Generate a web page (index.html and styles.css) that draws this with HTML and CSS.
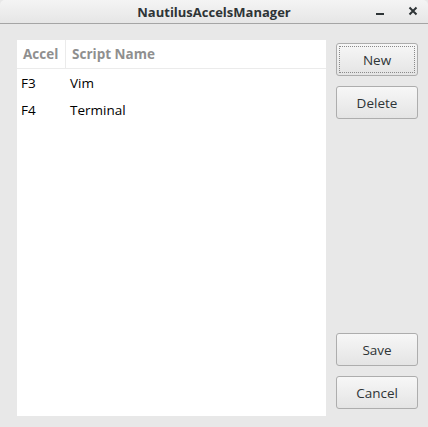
FILE: index.html
```html
<!DOCTYPE html>
<html>
<head>
<meta charset="utf-8">
<link rel="stylesheet" href="styles.css">
</head>
<body>
<div class="window">
  <div class="titlebar">
    <span class="title">NautilusAccelsManager</span>
    <div class="controls">
      <span class="ctl min"><svg width="10" height="10" viewBox="0 0 10 10"><rect x="1" y="7" width="8" height="2" fill="#2e3436"/></svg></span>
      <span class="ctl close"><svg width="10" height="10" viewBox="0 0 10 10"><path d="M1.5 1.5 L8.5 8.5 M8.5 1.5 L1.5 8.5" stroke="#2e3436" stroke-width="2"/></svg></span>
    </div>
  </div>
  <div class="content">
    <div class="list">
      <div class="header">
        <div class="col c1">Accel</div>
        <div class="col c2">Script Name</div>
      </div>
      <div class="row"><div class="col c1">F3</div><div class="col c2">Vim</div></div>
      <div class="row"><div class="col c1">F4</div><div class="col c2">Terminal</div></div>
    </div>
    <div class="buttons">
      <div class="group top">
        <button class="btn focused"><span>New</span></button>
        <button class="btn">Delete</button>
      </div>
      <div class="group bottom">
        <button class="btn">Save</button>
        <button class="btn">Cancel</button>
      </div>
    </div>
  </div>
</div>
</body>
</html>
```
FILE: styles.css
```css
html, body { margin: 0; padding: 0; }
body {
  width: 428px; height: 427px; overflow: hidden;
  background: #e8e8e8;
  font-family: "Open Sans", "Noto Sans", sans-serif;
  color: #2e3436;
}
.window { width: 428px; height: 427px; display: flex; flex-direction: column; background: #e8e8e8; }
.titlebar {
  height: 23px;
  border-bottom: 1px solid #a5a5a5;
  background: linear-gradient(#f4f4f4, #e6e6e6);
  border-radius: 5px 5px 0 0;
  position: relative;
  display: flex; align-items: center; justify-content: center;
}
.title { font-weight: bold; font-size: 13px; color: #2e3436; }
.controls { position: absolute; right: 10px; top: 6px; display: flex; gap: 23px; }
.ctl { display: flex; width: 10px; height: 10px; }
.content { flex: 1; display: flex; padding: 16px 10px 10px 17px; }
.list {
  width: 309px; height: 376px; background: #fff;
  font-size: 13.5px;
}
.header { display: flex; height: 28px; border-bottom: 1px solid #ebebeb; align-items: center; color: #8f8f8f; font-weight: bold; }
.header .c1 { border-right: 1px solid #ebebeb; height: 28px; line-height: 28px; }
.col.c1 { width: 42px; padding-left: 6px; box-sizing: border-box; flex: none; }
.header .c1 { width: 49px; }
.col.c2 { padding-left: 6px; }
.row { display: flex; height: 27px; align-items: center; color: #000; }
.row .c1 { width: 49px; padding-left: 4px; }
.row .c2 { padding-left: 4px; }
.buttons { flex: 1; display: flex; flex-direction: column; justify-content: space-between; padding-left: 10px; }
.group { display: flex; flex-direction: column; gap: 10px; }
.group.top { margin-top: 3px; }
.group.bottom { margin-bottom: 8px; }
.btn {
  width: 82px; height: 33px; box-sizing: border-box;
  border: 1px solid #adadad; border-radius: 3px;
  background: linear-gradient(#f7f7f7, #e4e4e4);
  font-family: inherit; font-size: 13.5px; color: #2e3436;
  padding: 0; display: flex; align-items: center; justify-content: center;
}
.btn.focused { outline: 1px dotted #8a8a8a; outline-offset: -4px; }
```
